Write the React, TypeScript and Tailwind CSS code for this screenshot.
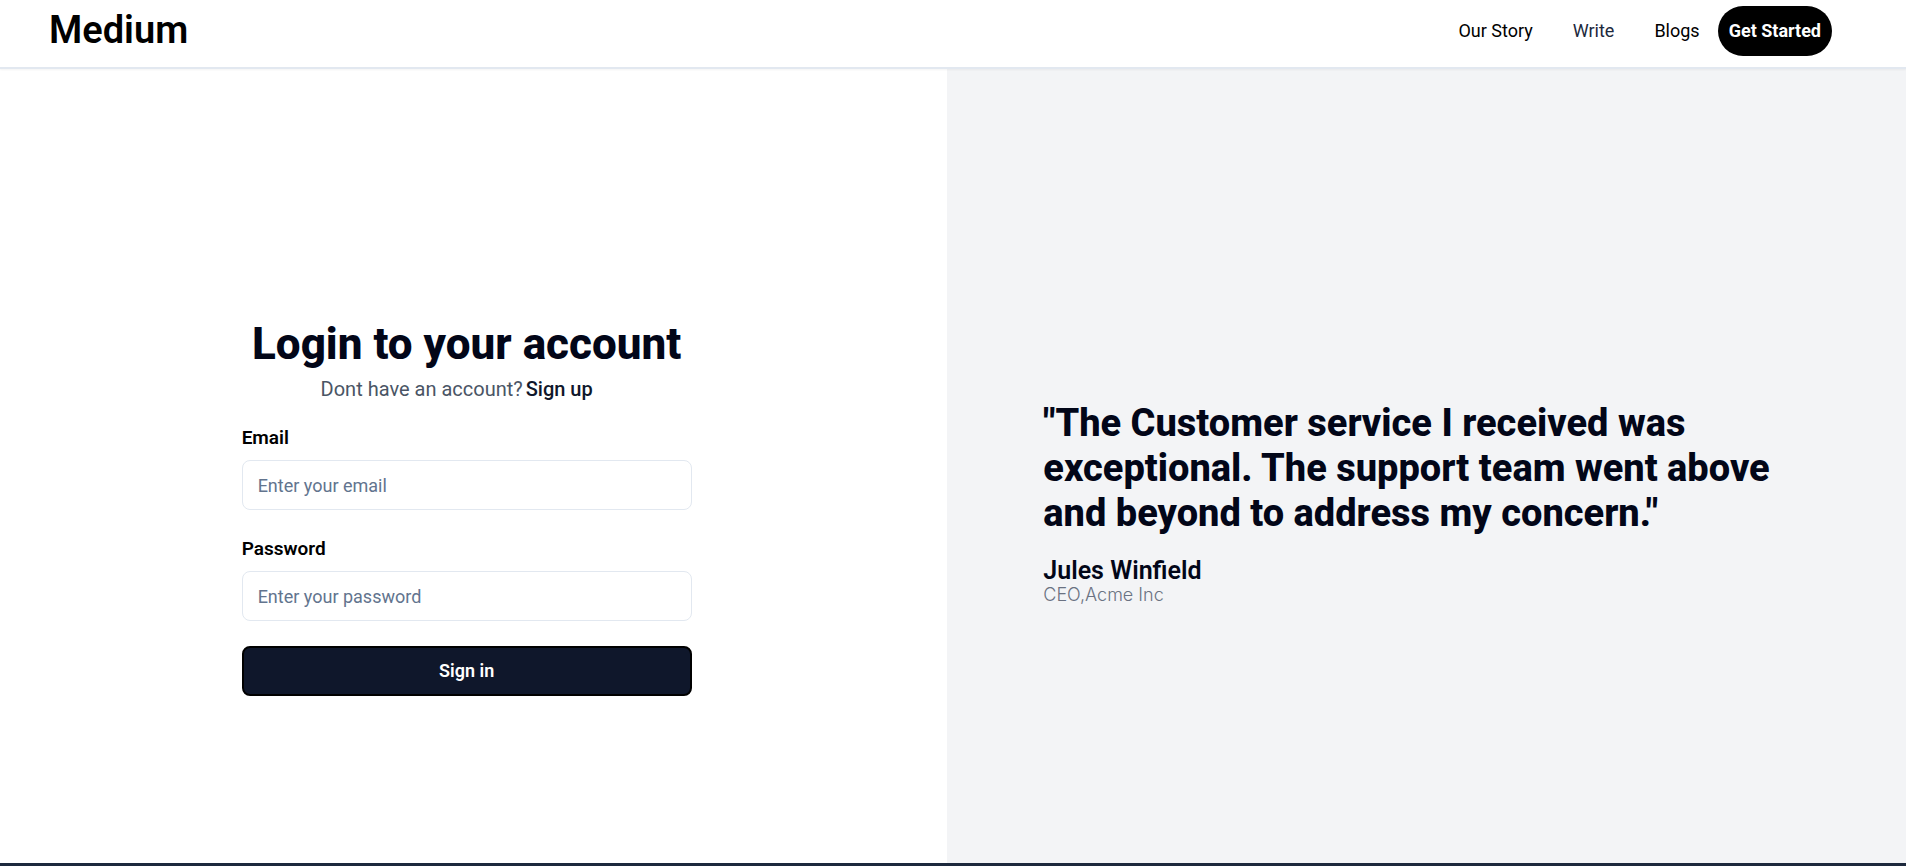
import { useState } from "react";

const navLinks = [
  { label: "Our Story", tone: "text-black" },
  { label: "Write", tone: "text-slate-800" },
  { label: "Blogs", tone: "text-black" },
];

function Header() {
  return (
    <header className="relative flex items-start justify-between border-b-2 border-slate-200 pt-1.5 pr-[74px] pb-[11px] pl-[49px] shadow-xs">
      <a href="#" className="text-[38px] leading-[48px] font-semibold text-black">
        Medium
      </a>
      <nav className="flex items-center text-lg text-black">
        <div className="mr-[18px] flex gap-10">
          {navLinks.map((link) => (
            <a key={link.label} href="#" className={link.tone}>
              {link.label}
            </a>
          ))}
        </div>
        <button type="button" className="h-[50px] rounded-full bg-black px-[11px] font-bold text-white">
          Get Started
        </button>
      </nav>
    </header>
  );
}

type FieldProps = {
  id: string;
  label: string;
  type: string;
  placeholder: string;
  value: string;
  onChange: (value: string) => void;
};

function Field({ id, label, type, placeholder, value, onChange }: FieldProps) {
  return (
    <div className="flex flex-col gap-2">
      <label htmlFor={id} className="text-[19px] leading-7 font-semibold text-black">
        {label}
      </label>
      <input
        id={id}
        type={type}
        placeholder={placeholder}
        value={value}
        onChange={(event) => onChange(event.target.value)}
        className="h-[50px] w-full rounded-lg border border-slate-200 bg-white px-[15px] text-lg placeholder:text-slate-500"
      />
    </div>
  );
}

function LoginForm() {
  const [email, setEmail] = useState("");
  const [password, setPassword] = useState("");

  return (
    <form className="flex w-full max-w-[450px] flex-col" onSubmit={(event) => event.preventDefault()}>
      <h1 className="text-center text-[44px] leading-[50px] font-extrabold">Login to your account</h1>
      <p className="mr-5 text-center text-xl leading-10 text-gray-600">
        Dont have an account?
        <a href="#" className="ml-[3px] font-medium text-slate-900">
          Sign up
        </a>
      </p>
      <div className="mt-[15px] flex flex-col gap-[25px]">
        <Field id="email" label="Email" type="email" placeholder="Enter your email" value={email} onChange={setEmail} />
        <Field
          id="password"
          label="Password"
          type="password"
          placeholder="Enter your password"
          value={password}
          onChange={setPassword}
        />
        <button
          type="submit"
          className="h-[50px] w-full rounded-lg border-2 border-black bg-slate-900 text-lg font-semibold text-white"
        >
          Sign in
        </button>
      </div>
    </form>
  );
}

function Testimonial() {
  return (
    <figure className="max-w-[730px]">
      <blockquote className="text-[38px] leading-[45px] font-extrabold">
        "The Customer service I received was exceptional. The support team went above and beyond to address my
        concern."
      </blockquote>
      <figcaption className="mt-[21px]">
        <div className="text-[25px] leading-7 font-semibold">Jules Winfield</div>
        <div className="font-['Inter',sans-serif] text-lg leading-5 font-light text-gray-500">CEO,Acme Inc</div>
      </figcaption>
    </figure>
  );
}

export default function App() {
  return (
    <div className="flex min-h-screen flex-col border-b-[3px] border-slate-800 bg-white font-['Roboto',sans-serif] text-slate-950">
      <Header />
      <main className="flex flex-1">
        <section className="flex flex-1 items-center justify-center pt-[83px] pr-3.5">
          <LoginForm />
        </section>
        <section className="flex w-[50.3%] items-center bg-gray-100 pt-[73px] pl-24">
          <Testimonial />
        </section>
      </main>
    </div>
  );
}
